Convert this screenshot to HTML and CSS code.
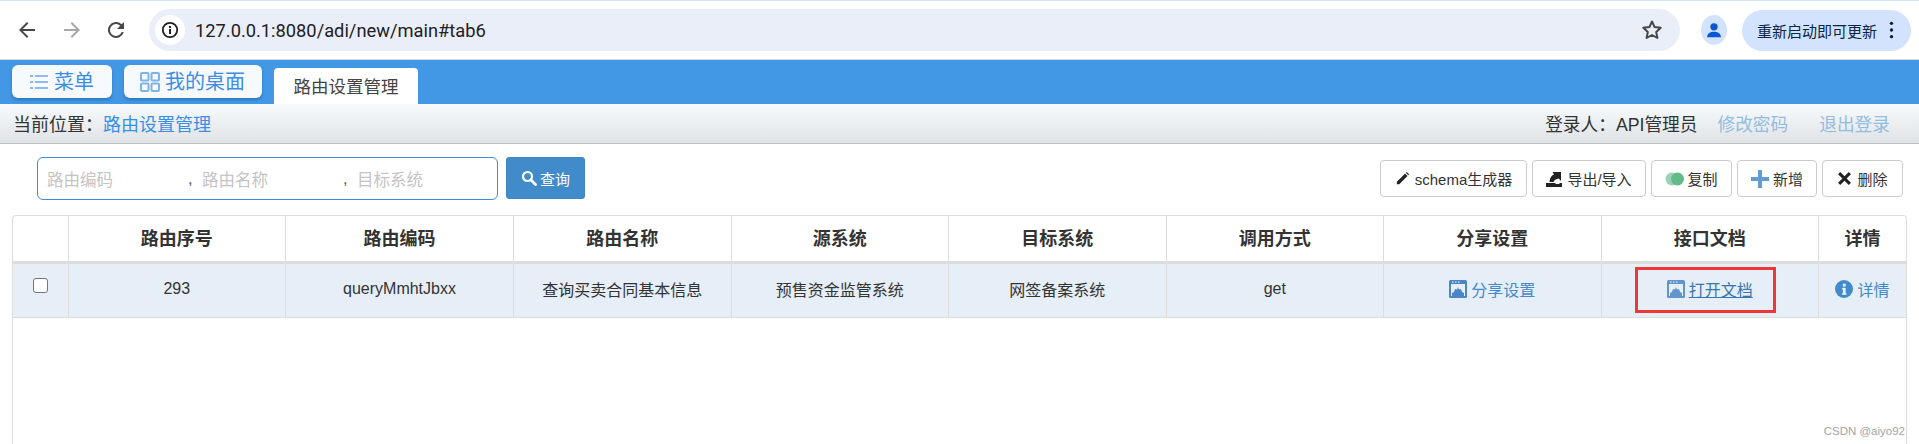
FILE: index.html
```html
<!DOCTYPE html>
<html lang="zh-CN">
<head>
<meta charset="utf-8">
<title>路由设置管理</title>
<link rel="stylesheet" href="styles.css">
</head>
<body>
<div class="page">
  <div class="topstrip"></div>
  <header class="chrome">
    <svg class="nav-ic" viewBox="0 0 24 24"><path d="M20 11H7.8l5.6-5.6L12 4l-8 8 8 8 1.4-1.4L7.8 13H20z" fill="#474747"/></svg>
    <svg class="nav-ic" viewBox="0 0 24 24"><path d="M4 11h12.2l-5.6-5.6L12 4l8 8-8 8-1.4-1.4 5.6-5.6H4z" fill="#a8a8a8"/></svg>
    <svg class="nav-ic" viewBox="0 0 24 24"><path d="M17.65 6.35A8 8 0 1 0 19.73 14h-2.08a6 6 0 1 1-1.41-6.24L13 11h7V4z" fill="#474747"/></svg>
    <div class="omnibox">
      <span class="site-info"><svg viewBox="0 0 20 20" class="info-ic"><circle cx="10" cy="10" r="7.2" fill="none" stroke="#1f1f1f" stroke-width="1.8"/><rect x="9" y="9" width="2" height="5" fill="#1f1f1f"/><rect x="9" y="6" width="2" height="2" fill="#1f1f1f"/></svg></span>
      <span class="url">127.0.0.1:8080/adi/new/main#tab6</span>
      <svg class="star" viewBox="0 0 24 24"><path d="M12 3.5l2.6 5.6 6.1.7-4.5 4.2 1.2 6-5.4-3-5.4 3 1.2-6-4.5-4.2 6.1-.7z" fill="none" stroke="#474747" stroke-width="2" stroke-linejoin="round"/></svg>
    </div>
    <span class="avatar"><svg viewBox="0 0 24 24"><circle cx="12" cy="8.5" r="4" fill="#0b57d0"/><path d="M4.5 20c0-4.2 3.4-6 7.5-6s7.500 1.800 7.500 6z" fill="#0b57d0"/></svg></span>
    <div class="update">
      <span>重新启动即可更新</span>
      <svg class="dots" viewBox="0 0 6 22"><circle cx="3" cy="3" r="2" fill="#041e49"/><circle cx="3" cy="11" r="2" fill="#041e49"/><circle cx="3" cy="19" r="2" fill="#041e49"/></svg>
    </div>
  </header>

  <nav class="bluebar">
    <a class="pill pill-menu">
      <svg class="pill-ic" viewBox="0 0 20 20"><g fill="#8dbbec"><rect x="1" y="3" width="3" height="2"/><rect x="1" y="9" width="3" height="2"/><rect x="1" y="15" width="3" height="2"/><rect x="6" y="3" width="13" height="2"/><rect x="6" y="9" width="13" height="2"/><rect x="6" y="15" width="13" height="2"/></g></svg>
      菜单
    </a>
    <a class="pill pill-desk">
      <svg class="pill-ic" viewBox="0 0 20 20"><g fill="none" stroke="#7fb3e8" stroke-width="2"><rect x="1" y="1" width="7.500" height="7.500" rx="1"/><rect x="11.500" y="1" width="7.500" height="7.500" rx="1"/><rect x="1" y="11.500" width="7.500" height="7.500" rx="1"/><rect x="11.500" y="11.500" width="7.500" height="7.500" rx="1"/></g></svg>
      我的桌面
    </a>
    <div class="tab">路由设置管理</div>
  </nav>

  <div class="crumbbar">
    <div class="crumb">当前位置：<a class="crumb-link">路由设置管理</a></div>
    <div class="userbox">
      <span class="who">登录人：API管理员</span>
      <a class="soft-link">修改密码</a>
      <a class="soft-link">退出登录</a>
    </div>
  </div>

  <div class="toolbar">
    <div class="search">
      <div class="searchbox">
        <span class="ph">路由编码</span><span class="comma">,</span>
        <span class="ph">路由名称</span><span class="comma">,</span>
        <span class="ph">目标系统</span>
      </div>
      <button class="btn-query">
        <svg class="q-ic" viewBox="0 0 16 16"><circle cx="6.500" cy="6.500" r="4.500" fill="none" stroke="#fff" stroke-width="2.200"/><path d="M10 10l4.500 4.500" stroke="#fff" stroke-width="2.800" stroke-linecap="round"/></svg>
        查询
      </button>
    </div>
    <div class="actions">
      <button class="btn btn-schema"><svg class="b-ic" viewBox="0 0 16 16"><path d="M2 11.500L10.800 2.700l2.500 2.500L4.500 14H2z" fill="#222"/><path d="M11.600 1.900l.9-.9 2.500 2.500-.9.9z" fill="#222"/></svg>schema生成器</button>
      <button class="btn btn-export"><svg class="b-ic b-ic-export" viewBox="0 0 16 16"><path d="M0 12h9l1 1h3l1-1h2v4H0z" fill="#222"/><path d="M3.500 11c.3-4 1.700-6.500 4.500-7.500L6.500 1H15v9l-2.300-2.500C10 8 8 9 7.500 11z" fill="#222"/></svg>导出/导入</button>
      <button class="btn btn-copy"><svg class="b-ic b-ic-wide" viewBox="0 0 20 16"><circle cx="7" cy="8" r="6.500" fill="#9ad2b4"/><circle cx="12.500" cy="8" r="6.500" fill="#62b98a"/></svg>复制</button>
      <button class="btn btn-add"><svg class="b-ic b-ic-plus" viewBox="0 0 18 18"><path d="M7 0h4v7h7v4h-7v7H7v-7H0V7h7z" fill="#639bd3"/></svg>新增</button>
      <button class="btn btn-del"><svg class="b-ic" viewBox="0 0 14 14"><path d="M3 1l4 4 4-4 2 2-4 4 4 4-2 2-4-4-4 4-2-2 4-4-4-4z" fill="#222"/></svg>删除</button>
    </div>
  </div>

  <div class="grid-wrap">
    <table class="grid">
      <colgroup>
        <col class="c-check"><col class="c-a"><col class="c-b"><col class="c-a"><col class="c-a"><col class="c-a"><col class="c-a"><col class="c-a"><col class="c-a"><col>
      </colgroup>
      <thead>
        <tr><th></th><th>路由序号</th><th>路由编码</th><th>路由名称</th><th>源系统</th><th>目标系统</th><th>调用方式</th><th>分享设置</th><th>接口文档</th><th>详情</th></tr>
      </thead>
      <tbody>
        <tr>
          <td><span class="check"></span></td>
          <td>293</td>
          <td>queryMmhtJbxx</td>
          <td>查询买卖合同基本信息</td>
          <td>预售资金监管系统</td>
          <td>网签备案系统</td>
          <td>get</td>
          <td><a class="cell-link"><svg class="win-ic" viewBox="0 0 18 18"><rect width="18" height="18" rx="1.500" fill="#4a86c5"/><rect x="2" y="4" width="14" height="12" fill="#e6eef8"/><g fill="#e6eef8"><rect x="3" y="1.500" width="1.500" height="1.200"/><rect x="6" y="1.500" width="1.500" height="1.200"/><rect x="9" y="1.500" width="1.500" height="1.200"/></g><path d="M3 16v-3l2-1 1-3 2 .5L9 7l1 2.500 2-.5 1 3 2 1v3z" fill="#4a86c5"/></svg>分享设置</a></td>
          <td><a class="cell-link doc-link"><svg class="win-ic win-soft" viewBox="0 0 18 18"><rect width="18" height="18" rx="1.500" fill="#4a86c5"/><rect x="2" y="4" width="14" height="12" fill="#e6eef8"/><g fill="#e6eef8"><rect x="3" y="1.500" width="1.500" height="1.200"/><rect x="6" y="1.500" width="1.500" height="1.200"/><rect x="9" y="1.500" width="1.500" height="1.200"/></g><path d="M3 16v-3l2-1 1-3 2 .5L9 7l1 2.500 2-.5 1 3 2 1v3z" fill="#4a86c5"/></svg><u>打开文档</u><span class="redbox"></span></a></td>
          <td><a class="cell-link"><svg class="win-ic win-info" viewBox="0 0 16 16"><circle cx="8" cy="8" r="8" fill="#428bca"/><rect x="7" y="7" width="2.500" height="6" fill="#e6eef8"/><rect x="6.200" y="7" width="2" height="1.300" fill="#e6eef8"/><rect x="6.200" y="11.800" width="4" height="1.300" fill="#e6eef8"/><rect x="7" y="3.300" width="2.500" height="2.500" fill="#e6eef8"/></svg>详情</a></td>
        </tr>
      </tbody>
    </table>
    <span class="watermark">CSDN @aiyo92</span>
  </div>
</div>
</body>
</html>
```

FILE: styles.css
```css
* { box-sizing: border-box; }
html, body { margin: 0; height: 100%; overflow: hidden; background: #fff; }
body { font-family: "Liberation Sans", "Noto Sans CJK SC", sans-serif; color: #333; }
.page { height: 444px; display: flex; flex-direction: column; }
.topstrip { height: 1px; background: #d3e3fd; flex: none; }

/* browser chrome */
.chrome { height: 59px; flex: none; display: flex; align-items: center; background: #fff; border-bottom: 1px solid #d5d8dc; padding: 0 8px 0 15px; }
.nav-ic { width: 24px; height: 24px; margin-right: 21px; flex: none; }
.nav-ic:nth-child(3) { margin-right: 21px; margin-left: -1px; }
.omnibox { flex: 1; height: 42px; background: #eaeef8; border-radius: 21px; display: flex; align-items: center; padding: 0 16px 0 6px; }
.site-info { width: 30px; height: 30px; border-radius: 50%; background: #fff; display: flex; align-items: center; justify-content: center; flex: none; }
.info-ic { width: 20px; height: 20px; }
.url { margin-left: 10px; font-family: "Roboto", "Liberation Sans", sans-serif; font-size: 18.300px; color: #202124; flex: 1; }
.star { width: 24px; height: 24px; flex: none; }
.avatar { width: 26px; height: 30px; border-radius: 50%; background: #d3e3fd; margin: 0 15px 0 21px; display: flex; align-items: center; justify-content: center; flex: none; }
.avatar svg { width: 22px; height: 22px; }
.update { height: 41px; width: 169px; background: #d3e3fd; border-radius: 21px; display: flex; align-items: center; justify-content: space-between; padding: 0 17px 0 15px; font-size: 15px; color: #0b2447; flex: none; }
.dots { width: 5px; height: 20px; }

/* blue bar */
.bluebar { height: 44px; flex: none; background: #4298e5; display: flex; align-items: flex-start; padding: 5px 0 0 12px; }
.pill { height: 33px; background: #f7fafd; border-radius: 6px; color: #3a8ee6; font-size: 20px; display: flex; align-items: center; box-shadow: 0 2px 3px rgba(20, 80, 140, .45); flex: none; padding-bottom: 2px; }
.pill-menu { width: 100px; padding-left: 17px; margin-right: 12px; }
.pill-desk { width: 138px; padding-left: 16px; margin-right: 12px; }
.pill-ic { width: 20px; height: 20px; margin-right: 5px; margin-top: 2px; flex: none; }
.tab { margin-top: 3px; width: 144px; height: 36px; background: #fff; border-radius: 4px 4px 0 0; color: #444; font-size: 17.500px; display: flex; align-items: center; justify-content: center; padding-bottom: 2px; }

/* crumb */
.crumbbar { height: 40px; flex: none; display: flex; align-items: center; justify-content: space-between; background: linear-gradient(#f8fbfd, #dfe3e6); border-bottom: 1px solid #b8c0c6; padding: 0 29px 2px 13px; font-size: 17.700px; color: #333; }
.crumb-link { color: #3a8ee6; }
.crumb { font-size: 18px; }
.userbox { display: flex; align-items: center; }
.who { margin-right: 20px; }
.soft-link { color: #94bcdf; margin-left: 31px; }
.who + .soft-link { margin-left: 0; }

/* toolbar */
.toolbar { flex: none; display: flex; justify-content: space-between; padding: 13px 16px 0 37px; height: 71px; }
.search { display: flex; gap: 8px; height: 43px; }
.searchbox { width: 461px; height: 43px; border: 1px solid #3a8ee0; border-radius: 6px; display: flex; align-items: center; padding: 0 9px; font-size: 16.500px; }
.ph { color: #c4c4c4; width: 141px; flex: none; }
.ph:last-child { width: auto; }
.comma { color: #555; width: 14px; flex: none; }
.btn-query { width: 79px; height: 42px; background: #428bca; border: 1px solid #3f86c4; border-radius: 3px; color: #fff; font: inherit; font-size: 15px; display: flex; align-items: center; justify-content: center; padding: 0; }
.q-ic { width: 16px; height: 16px; margin-right: 3px; }
.actions { display: flex; gap: 5px; height: 38px; margin-top: 3px; }
.btn { height: 37px; background: #fff; border: 1px solid #ccc; border-radius: 4px; color: #333; font: inherit; font-size: 15px; display: flex; align-items: center; justify-content: center; padding: 0; flex: none; }
.btn-schema { width: 147px; }
.btn-export { width: 114px; }
.btn-copy { width: 81px; }
.btn-add { width: 80px; }
.btn-del { width: 81px; }
.b-ic { width: 15px; height: 15px; margin-right: 5px; flex: none; }
.b-ic-export { width: 16px; height: 16px; }
.b-ic-wide { width: 20px; height: 16px; margin-right: 2px; }
.b-ic-plus { width: 18px; height: 18px; margin-right: 4px; }

/* table */
.grid-wrap { position: relative; flex: 1; margin: 0 12px; border: 1px solid #ddd; border-bottom: 0; border-radius: 4px 4px 0 0; }
.grid { width: 100%; table-layout: fixed; border-collapse: collapse; }
.c-check { width: 55px; }
.c-a { width: 217.500px; }
.c-b { width: 228px; }
.grid th { height: 46px; font-size: 18px; font-weight: 700; color: #333; border-right: 1px solid #ddd; border-bottom: 3px solid #ddd; text-align: center; padding: 0 0 2px; }
.grid td { height: 55px; background: #e6eef8; font-size: 16px; color: #333; border-right: 1px solid #ddd; border-bottom: 1px solid #ddd; text-align: center; padding: 0 0 2px; }
.grid th:last-child, .grid td:last-child { border-right: 0; }
.check { display: inline-block; width: 15px; height: 15px; background: #fff; border: 1px solid #767676; border-radius: 3px; vertical-align: 4px; }
.cell-link { position: relative; display: inline-flex; align-items: center; color: #428bca; }
.doc-link { color: #3a76ad; }
.win-ic { width: 18px; height: 18px; margin-right: 4px; flex: none; }
.win-soft { opacity: .85; }
.redbox { position: absolute; left: -32px; right: -23px; top: -10px; bottom: -12px; border: 3px solid #f03636; pointer-events: none; }
.watermark { position: absolute; right: 1px; bottom: 7px; font-size: 11.500px; color: #a3a3a3; }
```
